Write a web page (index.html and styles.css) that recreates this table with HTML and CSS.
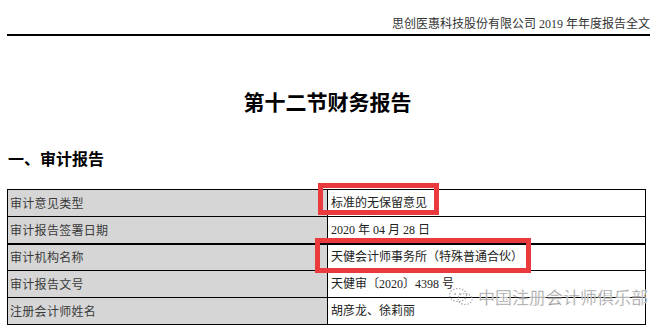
FILE: index.html
```html
<!DOCTYPE html>
<html lang="zh">
<head>
<meta charset="utf-8">
<link rel="stylesheet" href="styles.css">
</head>
<body>
<div class="page">
  <div class="running-head">思创医惠科技股份有限公司 2019 年年度报告全文</div>
  <h1 class="title">第十二节财务报告</h1>
  <h2 class="section">一、审计报告</h2>
  <div class="table-wrap">
    <table class="audit">
      <tr><td class="label">审计意见类型</td><td class="value">标准的无保留意见</td></tr>
      <tr><td class="label">审计报告签署日期</td><td class="value">2020 年 04 月 28 日</td></tr>
      <tr class="thick"><td class="label">审计机构名称</td><td class="value">天健会计师事务所（特殊普通合伙）</td></tr>
      <tr><td class="label">审计报告文号</td><td class="value">天健审〔2020〕4398 号</td></tr>
      <tr><td class="label">注册会计师姓名</td><td class="value">胡彦龙、徐莉丽</td></tr>
    </table>
    <div class="mark mark-1"></div>
    <div class="mark mark-2"></div>
    <div class="watermark">
      <svg class="wm-icon" width="26" height="20" viewBox="0 0 26 20">
        <ellipse cx="10" cy="8" rx="8.5" ry="6.5" fill="none" stroke="#aaa" stroke-width="1.2" stroke-dasharray="1.5 1.5"/>
        <ellipse cx="17" cy="12" rx="7" ry="5.5" fill="none" stroke="#aaa" stroke-width="1.2" stroke-dasharray="1.5 1.5"/>
        <circle cx="7" cy="7" r="0.9" fill="#aaa"/>
        <circle cx="12" cy="7" r="0.9" fill="#aaa"/>
      </svg>
      <span class="wm-text">中国注册会计师俱乐部</span>
    </div>
  </div>
</div>
</body>
</html>
```

FILE: styles.css
```css
html, body {
  margin: 0;
  padding: 0;
  background: #fff;
}
.page {
  width: 660px;
  padding: 0 10px 0 7px;
  box-sizing: border-box;
  font-family: "Liberation Serif", "Noto Sans CJK SC", serif;
  color: #222;
}
.running-head {
  height: 36px;
  box-sizing: border-box;
  display: flex;
  align-items: flex-end;
  justify-content: flex-end;
  padding-bottom: 2px;
  font-size: 12px;
  line-height: 16px;
  color: #333;
  border-bottom: 2px solid #000;
  white-space: pre;
}
.title {
  margin: 50px 0 0;
  text-align: center;
  font-family: "Noto Sans CJK SC", sans-serif;
  font-size: 21px;
  line-height: 30px;
  font-weight: 700;
  color: #000;
  padding-right: 2px;
}
.section {
  margin: 30px 0 0;
  font-family: "Noto Sans CJK SC", sans-serif;
  font-size: 16px;
  line-height: 24px;
  font-weight: 700;
  color: #000;
  padding-left: 1px;
}
.table-wrap {
  position: relative;
  margin-top: 19px;
  width: 639px;
}
.audit {
  border-collapse: collapse;
  width: 639px;
  table-layout: fixed;
}
.audit td {
  border: 1px solid #000;
  height: 27px;
  padding: 0 0 0 3px;
  box-sizing: border-box;
  font-size: 12px;
  line-height: 16px;
  vertical-align: middle;
}
.audit tr.thick td {
  border-top: 2px solid #000;
}
.audit td.label {
  width: 320px;
  background: #d6d6d6;
  color: #3a3a3a;
  font-family: "Noto Sans CJK SC", sans-serif;
  letter-spacing: 0.3px;
  padding-left: 2px;
}
.audit td.value {
  background: #fff;
  color: #222;
}
.mark {
  position: absolute;
  border: 5px solid #ea3a3e;
  box-sizing: border-box;
}
.mark-1 {
  left: 311px;
  top: -6px;
  width: 121px;
  height: 32px;
}
.mark-2 {
  left: 308px;
  top: 49px;
  width: 216px;
  height: 35px;
}
.watermark {
  position: absolute;
  left: 441px;
  top: 97px;
  display: flex;
  align-items: center;
  gap: 4px;
  white-space: nowrap;
}
.wm-text {
  font-family: "Noto Sans CJK SC", sans-serif;
  font-size: 17px;
  line-height: 22px;
  color: #9a9a9a;
  -webkit-text-stroke: 0.3px #fff;
}
```
